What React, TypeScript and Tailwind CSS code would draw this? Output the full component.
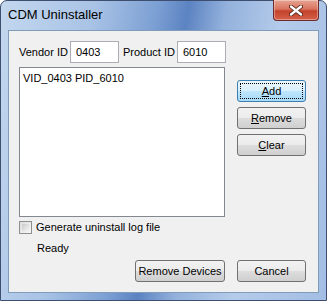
import React from "react";

const font = { fontFamily: '"Liberation Sans", Arial, sans-serif' };

const Button = ({
  children,
  isDefault = false,
  className = "",
}: {
  children: React.ReactNode;
  isDefault?: boolean;
  className?: string;
}) => (
  <div
    className={`relative flex h-[22px] items-center justify-center rounded-[3px] border text-[11px] text-black ${
      isDefault
        ? "border-[#3c7fb1] bg-[linear-gradient(#eaf6fd_0%,#d9f0fc_50%,#bee6fd_51%,#a7d9f5_100%)]"
        : "border-[#707070] bg-[linear-gradient(#f2f2f2_0%,#ebebeb_50%,#dddddd_51%,#cfcfcf_100%)]"
    } ${className}`}
  >
    {isDefault && (
      <div className="absolute inset-[2px] border border-dotted border-black" />
    )}
    <span className="relative">{children}</span>
  </div>
);

const TextBox = ({ value, className = "" }: { value: string; className?: string }) => (
  <div
    className={`h-[22px] border border-[#abadb3] bg-white pl-[5px] pt-[2px] text-[11px] ${className}`}
  >
    {value}
  </div>
);

export default function App() {
  return (
    <div style={font} className="h-[301px] w-[327px] bg-white">
      <div className="relative flex h-full w-full flex-col rounded-t-[7px] border border-[#3e4e6e] bg-[linear-gradient(100deg,#c3d7ee_0%,#a9c3e6_25%,#7b9fd3_42%,#5c83c2_50%,#93b1dc_60%,#b4cbea_75%,#a3bde4_100%)] px-[7px] pb-[7px]">
        {/* Title bar */}
        <div className="flex h-[29px] items-center pb-[1px] text-[13px] text-black">
          CDM Uninstaller
        </div>
        <div className="absolute right-[7px] top-[-1px] flex h-[21px] w-[46px] items-center justify-center rounded-b-[4px] border border-t-0 border-[#6d2a2a] bg-[linear-gradient(#e8a493_0%,#d9745f_45%,#c3422a_55%,#d5614a_100%)] shadow-[inset_0_0_0_1px_rgba(255,255,255,0.35)]">
          <svg width="14" height="11" viewBox="0 0 14 11">
            <path
              d="M2 1.5 L12 9.5 M12 1.5 L2 9.5"
              stroke="#4a1d15"
              strokeWidth="4"
              strokeLinecap="round"
            />
            <path
              d="M2 1.5 L12 9.5 M12 1.5 L2 9.5"
              stroke="#ffffff"
              strokeWidth="2.4"
              strokeLinecap="round"
            />
          </svg>
        </div>

        {/* Client area */}
        <div className="flex flex-1 flex-col border border-[#7f9db9] bg-[#f0f0f0] pl-[10px] pt-[10px] text-[11px] text-black">
          <div className="flex h-[22px] items-center">
            <span className="w-[51px]">Vendor ID</span>
            <TextBox value="0403" className="w-[49px]" />
            <span className="ml-[4px] w-[54px]">Product ID</span>
            <TextBox value="6010" className="w-[49px]" />
          </div>

          <div className="mt-[4px] flex">
            <div className="h-[150px] w-[206px] border border-[#828790] bg-white pl-[3px] pt-[2px]">
              VID_0403 PID_6010
            </div>
            <div className="ml-[12px] flex w-[69px] flex-col gap-[5px] pt-[13px]">
              <Button isDefault>
                <span className="underline">A</span>dd
              </Button>
              <Button>
                <span className="underline">R</span>emove
              </Button>
              <Button>
                <span className="underline">C</span>lear
              </Button>
            </div>
          </div>

          <div className="mt-[4px] flex h-[13px] items-center leading-[13px]">
            <div className="h-[13px] w-[13px] border border-[#8f8f8f] bg-[linear-gradient(135deg,#dcdcdc,#f8f8f8)] p-[2px]">
              <div className="h-full w-full bg-[linear-gradient(135deg,#cbcbcb,#f4f4f4)]" />
            </div>
            <span className="ml-[4px]">Generate uninstall log file</span>
          </div>

          <div className="ml-[18px] mt-[8px] h-[13px] leading-[13px]">Ready</div>

          <div className="mt-[5px] flex">
            <Button className="ml-[116px] w-[90px]">Remove Devices</Button>
            <Button className="ml-[12px] w-[69px]">Cancel</Button>
          </div>
        </div>
      </div>
    </div>
  );
}
